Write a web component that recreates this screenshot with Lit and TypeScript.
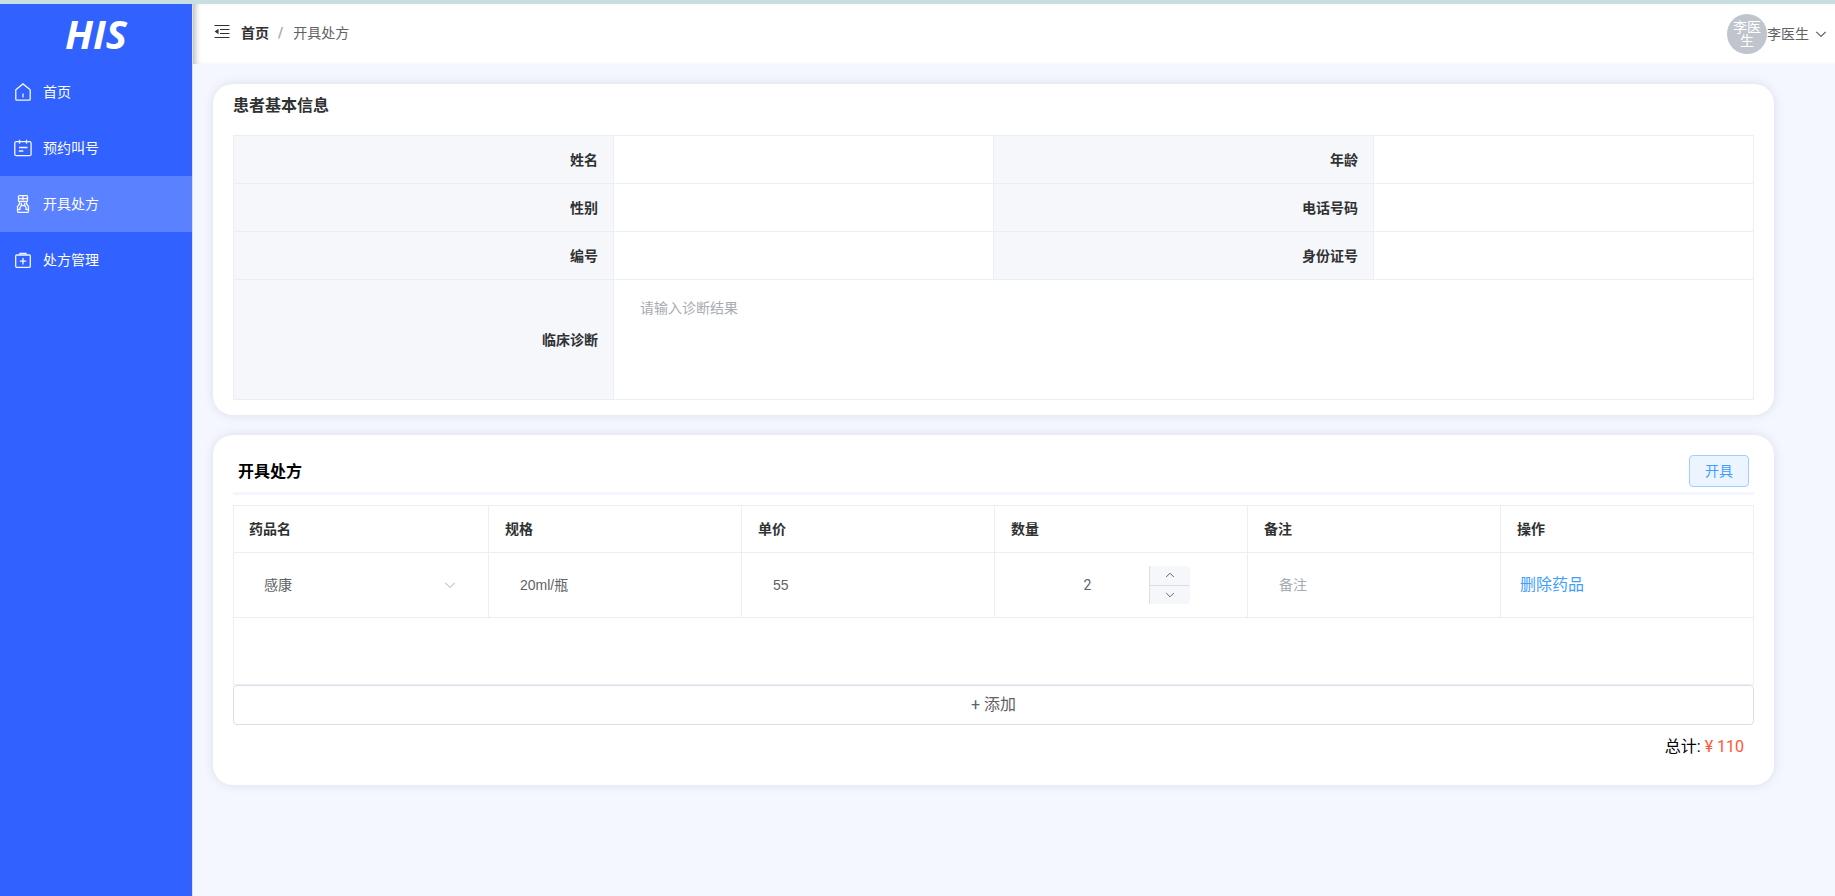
import { LitElement, html, css, svg } from "lit";
import { customElement, state } from "lit/decorators.js";

interface MenuItem {
  label: string;
  icon: string;
}

interface Drug {
  name: string;
  spec: string;
  price: number;
  count: number;
  remark: string;
}

const icons: Record<string, unknown> = {
  home: svg`<path d="M1.8 16.2V6.8L9 .9l7.2 5.900v9.400a1 1 0 0 1-1 1H2.800a1 1 0 0 1-1-1zM9 10.500v4"/>`,
  calendar: svg`<rect x=".8" y="2.700" width="16.300" height="14" rx="1.500"/><path d="M5.500 .8v4M12.500 .8v4M5 8.500h8.500M4.800 12h4.500"/>`,
  bottle: svg`<rect x="4.500" y=".7" width="9" height="5.800" rx=".8"/><path d="M4.500 3.700h9M9 1v4.500M5.500 6.500v2.500l-2 2.500v4.700a1.200 1.200 0 0 0 1.200 1.200h8.600a1.200 1.200 0 0 0 1.200-1.200v-4.700l-2-2.500V6.500M7.300 8v2.500L6 12.500v2.500M10.700 8v2.500l1.300 2v2.500M7.300 10.500h3.400M3.500 14.500H6M12 14.500h2.500"/>`,
  aid: svg`<rect x="1.700" y="4" width="14.600" height="12.300" rx="1"/><path d="M6 3.700V2.300h6v1.400M9 7v6.500M5.800 10.200h6.400"/>`,
};

@customElement("app-root")
export class AppRoot extends LitElement {
  static styles = css`
    :host {
      display: flex;
      flex-direction: column;
      min-height: 100vh;
      background: #f4f7ff;
      color: #303133;
      font-family: Roboto, "Noto Sans CJK SC", sans-serif;
      font-size: 14px;
      line-height: 20px;
    }
    * {
      box-sizing: border-box;
    }
    button,
    input,
    select,
    textarea {
      font: inherit;
      color: inherit;
      border: 0;
      margin: 0;
      padding: 0;
      background: none;
      outline: none;
      appearance: none;
    }
    button {
      cursor: pointer;
    }
    a {
      color: inherit;
      text-decoration: none;
    }
    svg {
      display: block;
      fill: none;
      stroke: currentColor;
    }
    .strip {
      height: 4px;
      background: #c8dee1;
    }
    .shell {
      display: flex;
      flex: 1;
    }
    .side {
      width: 193px;
      flex: none;
      background: #3161ff;
      border-right: 1px solid #dcdfe6;
      color: #fff;
    }
    .logo {
      height: 60px;
      margin: 0;
      text-align: center;
      font: italic 700 40px/60px "Open Sans", sans-serif;
    }
    .menu-link {
      display: flex;
      align-items: center;
      gap: 11px;
      height: 56px;
      padding-left: 14px;
    }
    .menu-link.active {
      background: #5a81ff;
    }
    .menu-icon {
      width: 18px;
      height: 18px;
      stroke-width: 1.3;
      opacity: 0.95;
    }
    .main {
      flex: 1;
      min-width: 0;
    }
    .header {
      display: flex;
      align-items: center;
      justify-content: space-between;
      height: 60px;
      padding: 0 8px 0 21px;
      background: #fff;
      box-shadow: inset 6px 0 6px -4px rgba(0, 0, 0, 0.3);
    }
    .crumbs {
      display: flex;
      align-items: center;
      padding-bottom: 2px;
    }
    .fold {
      width: 16px;
      height: 16px;
      margin: 0 11px 3px 0;
      color: #303133;
    }
    .crumb-home {
      font-weight: 700;
    }
    .crumb-sep {
      margin: 0 10px 0 9px;
      color: #a8abb2;
      font-weight: 700;
    }
    .crumb-here {
      color: #606266;
    }
    .user {
      display: flex;
      align-items: center;
      color: #606266;
    }
    .avatar {
      display: flex;
      align-items: center;
      width: 40px;
      height: 40px;
      padding: 0 5px;
      border-radius: 50%;
      background: #c0c4cc;
      color: #fff;
      text-align: center;
      line-height: 14px;
    }
    .user-caret {
      margin-left: 6px;
      stroke-width: 1.2;
    }
    .content {
      display: flex;
      flex-direction: column;
      gap: 20px;
      padding: 20px 61px 20px 20px;
    }
    .card {
      padding: 0 20px;
      border-radius: 20px;
      background: #fff;
      box-shadow: 0 0 12px rgba(0, 0, 0, 0.1);
    }
    .card-info {
      padding-bottom: 15px;
    }
    .card-rx {
      padding-bottom: 27px;
    }
    .title {
      margin: 0;
      font-size: 16px;
      font-weight: 700;
      line-height: 24px;
    }
    .card-info .title {
      padding: 10px 0 17px;
    }
    table {
      width: 100%;
      border-collapse: collapse;
      table-layout: fixed;
    }
    th,
    td {
      border: 1px solid #ebeef5;
      padding: 0 15px;
    }
    .info th {
      height: 48px;
      background: #f5f7fa;
      text-align: right;
    }
    .info .tall th {
      height: 120px;
    }
    .diagnosis {
      display: block;
      width: 100%;
      height: 94px;
      padding: 5px 11px;
      resize: none;
    }
    ::placeholder {
      color: #a8abb2;
      opacity: 1;
    }
    .rx-head {
      display: flex;
      align-items: center;
      justify-content: space-between;
      padding: 20px 5px 5px;
      border-bottom: 3px solid #f4f7ff;
      margin-bottom: 10px;
      color: #000;
    }
    .rx-head .title {
      padding-top: 2px;
    }
    .issue {
      width: 60px;
      height: 32px;
      border: 1px solid #a0cfff;
      border-radius: 4px;
      background: #ecf5ff;
      color: #409eff;
    }
    .rx th {
      height: 47px;
      text-align: left;
    }
    .rx td {
      height: 65px;
      color: #606266;
    }
    .rx th + th,
    .rx td + td {
      padding-left: 16px;
    }
    .rx .rest td {
      height: 67px;
    }
    .col-name {
      width: 255px;
    }
    .field {
      display: flex;
      align-items: center;
      height: 32px;
      padding: 0 15px;
      font-family: "Liberation Sans", "Noto Sans CJK SC", sans-serif;
    }
    .field > input,
    .field > select {
      flex: 1;
      width: 100%;
      min-width: 0;
    }
    .select-caret {
      color: #a8abb2;
      margin-right: 2px;
    }
    .stepper {
      display: flex;
      width: 179px;
      height: 38px;
    }
    .stepper input {
      flex: 1;
      min-width: 0;
      padding-left: 15px;
      text-align: center;
    }
    .steps {
      display: flex;
      flex-direction: column;
      width: 41px;
      border-left: 1px solid #dcdfe6;
      border-radius: 0 4px 4px 0;
      overflow: hidden;
      background: #f5f7fa;
    }
    .steps button {
      display: flex;
      flex: 1;
      align-items: center;
      justify-content: center;
    }
    .steps button + button {
      border-top: 1px solid #dcdfe6;
    }
    .remove {
      padding-left: 3px;
      color: #409eff;
      font-size: 16px;
    }
    .add {
      display: block;
      width: 100%;
      height: 40px;
      border: 1px solid #dcdfe6;
      border-radius: 4px;
      color: #606266;
      font-size: 16px;
    }
    .total {
      margin: 0;
      padding: 11px 10px 0;
      color: #000;
      font-size: 16px;
      line-height: 22px;
      text-align: right;
    }
    .amount {
      margin-left: 4px;
      color: #ff5733;
    }
  `;

  @state() private menu: MenuItem[] = [
    { label: "首页", icon: "home" },
    { label: "预约叫号", icon: "calendar" },
    { label: "开具处方", icon: "bottle" },
    { label: "处方管理", icon: "aid" },
  ];

  @state() private active = 2;

  @state() private drugs: Drug[] = [
    { name: "感康", spec: "20ml/瓶", price: 55, count: 2, remark: "" },
  ];

  private pairs = [
    ["姓名", "年龄"],
    ["性别", "电话号码"],
    ["编号", "身份证号"],
  ];

  private step(i: number, by: number) {
    this.drugs = this.drugs.map((d, k) =>
      k === i ? { ...d, count: Math.max(1, d.count + by) } : d
    );
  }

  private add() {
    this.drugs = [...this.drugs, { name: "感康", spec: "20ml/瓶", price: 55, count: 1, remark: "" }];
  }

  private remove(i: number) {
    this.drugs = this.drugs.filter((_, k) => k !== i);
  }

  private caret(cls: string, size: number, up = false) {
    return html`<svg class=${cls} width=${size} height=${size} viewBox="0 0 12 12" aria-hidden="true">
      <path d=${up ? "M2.200 8L6 4.200 9.800 8" : cls ? "M1.300 3.800L6 8.500l4.700-4.700" : "M2.200 4L6 7.800 9.800 4"} />
    </svg>`;
  }

  render() {
    const total = this.drugs.reduce((s, d) => s + d.price * d.count, 0);
    return html`
      <div class="strip"></div>
      <div class="shell">
        <aside class="side">
          <h1 class="logo">HIS</h1>
          <nav>
            ${this.menu.map(
              (m, i) => html`<a
                class="menu-link ${i === this.active ? "active" : ""}"
                href="#"
                @click=${(e: Event) => {
                  e.preventDefault();
                  this.active = i;
                }}
              >
                <svg class="menu-icon" viewBox="0 0 18 18" aria-hidden="true">${icons[m.icon]}</svg>
                <span>${m.label}</span>
              </a>`
            )}
          </nav>
        </aside>
        <div class="main">
          <header class="header">
            <nav class="crumbs">
              <button class="fold" aria-label="折叠菜单">
                <svg width="16" height="16" viewBox="0 0 16 16">
                  <path d="M.5 1.500h15M6 5.500h9.500M6 9.500h9.500M.5 13.500h15" />
                  <path d="M4.500 4.800v5.400L.6 7.500z" fill="currentColor" stroke="none" />
                </svg>
              </button>
              <a class="crumb-home" href="#">首页</a>
              <span class="crumb-sep">/</span>
              <span class="crumb-here">开具处方</span>
            </nav>
            <button class="user">
              <span class="avatar">李医生</span>
              <span>李医生</span>
              ${this.caret("user-caret", 12)}
            </button>
          </header>
          <main class="content">
            <section class="card card-info">
              <h2 class="title">患者基本信息</h2>
              <table class="info">
                <tbody>
                  ${this.pairs.map(
                    ([a, b]) => html`<tr>
                      <th scope="row">${a}</th>
                      <td></td>
                      <th scope="row">${b}</th>
                      <td></td>
                    </tr>`
                  )}
                  <tr class="tall">
                    <th scope="row"><label for="diagnosis">临床诊断</label></th>
                    <td colspan="3">
                      <textarea id="diagnosis" class="diagnosis" placeholder="请输入诊断结果"></textarea>
                    </td>
                  </tr>
                </tbody>
              </table>
            </section>
            <section class="card card-rx">
              <div class="rx-head">
                <h2 class="title">开具处方</h2>
                <button class="issue">开具</button>
              </div>
              <table class="rx">
                <thead>
                  <tr>
                    <th class="col-name" scope="col">药品名</th>
                    <th scope="col">规格</th>
                    <th scope="col">单价</th>
                    <th scope="col">数量</th>
                    <th scope="col">备注</th>
                    <th scope="col">操作</th>
                  </tr>
                </thead>
                <tbody>
                  ${this.drugs.map(
                    (d, i) => html`<tr>
                      <td>
                        <div class="field">
                          <select aria-label="药品名">
                            <option>${d.name}</option>
                          </select>
                          ${this.caret("select-caret", 12)}
                        </div>
                      </td>
                      <td><div class="field"><input aria-label="规格" .value=${d.spec} readonly /></div></td>
                      <td><div class="field"><input aria-label="单价" .value=${String(d.price)} readonly /></div></td>
                      <td>
                        <div class="stepper">
                          <input aria-label="数量" inputmode="numeric" .value=${String(d.count)} />
                          <span class="steps">
                            <button aria-label="增加" @click=${() => this.step(i, 1)}>${this.caret("", 12, true)}</button>
                            <button aria-label="减少" @click=${() => this.step(i, -1)}>${this.caret("", 12)}</button>
                          </span>
                        </div>
                      </td>
                      <td><div class="field"><input aria-label="备注" placeholder="备注" .value=${d.remark} /></div></td>
                      <td><button class="remove" @click=${() => this.remove(i)}>删除药品</button></td>
                    </tr>`
                  )}
                  <tr class="rest">
                    <td colspan="6"></td>
                  </tr>
                </tbody>
              </table>
              <button class="add" @click=${this.add}>+ 添加</button>
              <p class="total">总计:<span class="amount">¥ ${total}</span></p>
            </section>
          </main>
        </div>
      </div>
    `;
  }
}
